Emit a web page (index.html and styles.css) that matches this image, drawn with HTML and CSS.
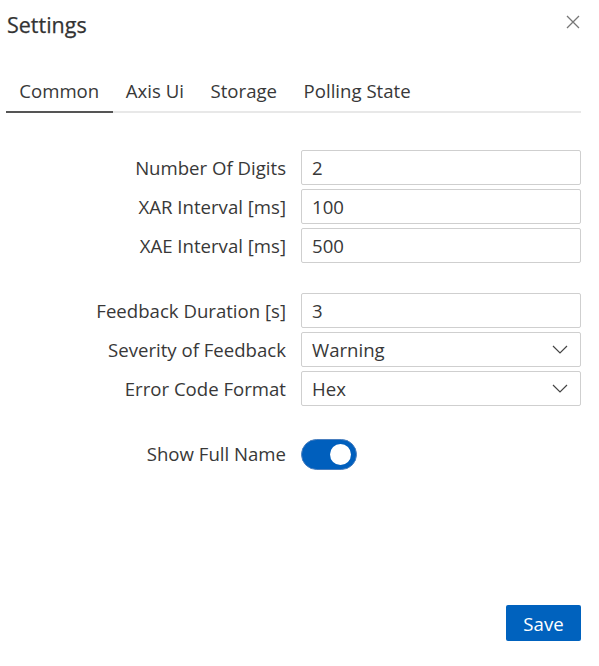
FILE: index.html
```html
<!DOCTYPE html>
<html lang="en">
<head>
<meta charset="utf-8">
<title>Settings</title>
<link rel="stylesheet" href="styles.css">
</head>
<body>
<div class="dialog">
  <header class="header">
    <h1 class="title">Settings</h1>
    <button class="close" aria-label="Close">
      <svg width="14" height="14" viewBox="0 0 14 14"><path d="M1 1 L13 13 M13 1 L1 13" stroke="#777" stroke-width="1.3" fill="none"/></svg>
    </button>
  </header>
  <nav class="tabs">
    <div class="tab active">Common</div>
    <div class="tab">Axis Ui</div>
    <div class="tab">Storage</div>
    <div class="tab">Polling State</div>
  </nav>
  <form class="form">
    <div class="group">
      <label class="label">Number Of Digits</label>
      <div class="field">2</div>
      <label class="label">XAR Interval [ms]</label>
      <div class="field">100</div>
      <label class="label">XAE Interval [ms]</label>
      <div class="field">500</div>
    </div>
    <div class="group">
      <label class="label">Feedback Duration [s]</label>
      <div class="field">3</div>
      <label class="label">Severity of Feedback</label>
      <div class="field select">Warning<svg class="chev" width="16" height="9" viewBox="0 0 16 9"><path d="M1 1 L8 8 L15 1" stroke="#444" stroke-width="1.2" fill="none"/></svg></div>
      <label class="label">Error Code Format</label>
      <div class="field select">Hex<svg class="chev" width="16" height="9" viewBox="0 0 16 9"><path d="M1 1 L8 8 L15 1" stroke="#444" stroke-width="1.2" fill="none"/></svg></div>
    </div>
    <div class="group">
      <label class="label">Show Full Name</label>
      <div class="toggle-cell"><span class="toggle"><span class="knob"></span></span></div>
    </div>
  </form>
  <footer class="footer">
    <button class="save" type="button">Save</button>
  </footer>
</div>
</body>
</html>
```
FILE: styles.css
```css
html, body {
  margin: 0;
  padding: 0;
  background: #fff;
}
body {
  font-family: "Open Sans", "Noto Sans", sans-serif;
  color: #383838;
}
.dialog {
  box-sizing: border-box;
  height: 666px;
  display: flex;
  flex-direction: column;
  padding: 8px 18px 25px 6px;
}
.header {
  display: flex;
  justify-content: space-between;
  align-items: center;
  height: 34px;
}
.title {
  margin: 0 0 0 1px;
  font-size: 21.5px;
  font-weight: 500;
  color: #333;
  line-height: 34px;
  -webkit-text-stroke: 0.25px #333;
}
.close {
  border: 0;
  background: none;
  padding: 0;
  width: 14px;
  height: 14px;
  margin-right: 1px;
  margin-top: -6px;
  display: flex;
}
.tabs {
  display: flex;
  margin-top: 29px;
  border-bottom: 2px solid #e8e8e8;
}
.tab {
  font-size: 18.6px;
  line-height: 40px;
  padding: 0 13.3px;
  color: #383838;
  margin-bottom: -2px;
  border-bottom: 2px solid transparent;
}
.tab.active {
  border-bottom-color: #555;
}
.form {
  display: flex;
  flex-direction: column;
  gap: 30px;
  margin-top: 37px;
}
.group {
  display: grid;
  grid-template-columns: 280px 1fr;
  column-gap: 15px;
  row-gap: 4px;
  align-items: center;
}
.label {
  text-align: right;
  font-size: 18.6px;
  color: #383838;
}
.field {
  box-sizing: border-box;
  height: 35px;
  border: 1px solid #cfcfcf;
  border-radius: 2px;
  padding: 0 10px;
  font-size: 18.6px;
  display: flex;
  align-items: center;
  justify-content: space-between;
}
.chev {
  margin-right: 2px;
}
.toggle-cell {
  display: flex;
  align-items: center;
  height: 31px;
  margin-top: 3px;
}
.toggle {
  box-sizing: border-box;
  width: 56px;
  height: 31px;
  border-radius: 16px;
  background: #005fbd;
  border: 1px solid #4a7fbf;
  display: flex;
  align-items: center;
  justify-content: flex-end;
  padding-right: 5px;
}
.knob {
  width: 21px;
  height: 21px;
  border-radius: 50%;
  background: #fff;
}
.footer {
  margin-top: auto;
  display: flex;
  justify-content: flex-end;
}
.save {
  width: 75px;
  height: 36px;
  border: 0;
  border-radius: 2px;
  background: #0062be;
  color: #fff;
  font-family: "Open Sans", "Noto Sans", sans-serif;
  font-size: 18.6px;
  padding: 0;
}
```
